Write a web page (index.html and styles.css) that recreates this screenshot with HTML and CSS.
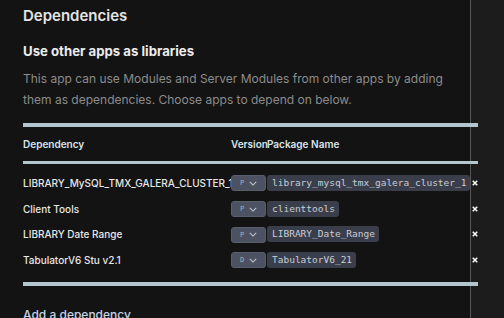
FILE: index.html
```html
<!DOCTYPE html>
<html lang="en">
<head>
    <meta charset="UTF-8">
    <meta name="viewport" content="width=device-width, initial-scale=1.0">
    <title>Dependencies</title>
    <link rel="stylesheet" href="styles.css">
</head>
<body>
    <main class="panel">
        <h1>Dependencies</h1>

        <section class="deps">
            <h2>Use other apps as libraries</h2>
            <p class="intro">This app can use Modules and Server Modules from other apps by adding them as dependencies. Choose apps to depend on below.</p>

            <div class="dep-table">
                <div class="dep-head">
                    <span>Dependency</span>
                    <span>Version</span>
                    <span>Package Name</span>
                </div>

                <div class="dep-body">
                    <div class="dep-row">
                        <span class="dep-name">LIBRARY_MySQL_TMX_GALERA_CLUSTER_1</span>
                        <span class="version">P <svg viewBox="0 0 10 6"><path d="M1 1l4 4 4-4"/></svg></span>
                        <span class="pkg">library_mysql_tmx_galera_cluster_1</span>
                        <span class="remove"><svg viewBox="0 0 8 8"><path d="M1 1l6 6M7 1l-6 6"/></svg></span>
                    </div>
                    <div class="dep-row">
                        <span class="dep-name">Client Tools</span>
                        <span class="version">P <svg viewBox="0 0 10 6"><path d="M1 1l4 4 4-4"/></svg></span>
                        <span class="pkg">clienttools</span>
                        <span class="remove"><svg viewBox="0 0 8 8"><path d="M1 1l6 6M7 1l-6 6"/></svg></span>
                    </div>
                    <div class="dep-row">
                        <span class="dep-name">LIBRARY Date Range</span>
                        <span class="version">P <svg viewBox="0 0 10 6"><path d="M1 1l4 4 4-4"/></svg></span>
                        <span class="pkg">LIBRARY_Date_Range</span>
                        <span class="remove"><svg viewBox="0 0 8 8"><path d="M1 1l6 6M7 1l-6 6"/></svg></span>
                    </div>
                    <div class="dep-row">
                        <span class="dep-name">TabulatorV6 Stu v2.1</span>
                        <span class="version">D <svg viewBox="0 0 10 6"><path d="M1 1l4 4 4-4"/></svg></span>
                        <span class="pkg">TabulatorV6_21</span>
                        <span class="remove"><svg viewBox="0 0 8 8"><path d="M1 1l6 6M7 1l-6 6"/></svg></span>
                    </div>
                </div>
            </div>

            <h3 class="add-dep">Add a dependency</h3>
        </section>
    </main>
</body>
</html>
```

FILE: styles.css
```css
* {
    margin: 0;
    padding: 0;
    box-sizing: border-box;
    font-family: 'Inter', sans-serif;
}

body {
    background-color: #1c1c1c;
    color: #e6e6e6;
    overflow: hidden;
}

.panel {
    width: 471px;
    min-height: 100vh;
    padding: 6px 0 0 23px;
    background: #131313;
    border-right: 1px solid #555;
}

h1 {
    font-size: 15px;
    font-weight: 600;
    line-height: 20px;
    color: #e4e4e4;
}

.deps h2 {
    margin-top: 15px;
    font-size: 13.2px;
    font-weight: 700;
    line-height: 20px;
    color: #ececec;
}

.intro {
    margin-top: 7px;
    max-width: 420px;
    font-size: 12px;
    line-height: 21px;
    color: #8c8c8c;
}

.dep-table {
    width: 455px;
    margin-top: 13px;
    border-top: 4px solid #b3c6ce;
    border-bottom: 4px solid #b3c6ce;
}

.dep-head {
    display: grid;
    grid-template-columns: 208px 36px 1fr;
    align-items: center;
    height: 37px;
    border-bottom: 3px solid #b3c6ce;
    font-size: 10px;
    font-weight: 600;
    color: #d9e4ec;
    white-space: nowrap;
}

.dep-body {
    padding: 6px 0 9px;
}

.dep-row {
    display: grid;
    grid-template-columns: 208px 36px 203px 8px;
    align-items: center;
    height: 25.7px;
    white-space: nowrap;
}

.dep-name {
    font-size: 10px;
    font-weight: 500;
    color: #e8e8e8;
}

.version {
    display: flex;
    align-items: center;
    justify-content: center;
    gap: 5px;
    width: 35px;
    height: 16px;
    margin-top: 1px;
    background: #4c5262;
    border: 1px solid #575d6b;
    border-radius: 3px;
    font-family: 'DejaVu Sans Mono', monospace;
    font-size: 7px;
    color: #a9aebb;
}

.version svg {
    width: 8px;
    height: 5px;
    fill: none;
    stroke: #c3c7d0;
    stroke-width: 1.3;
}

.pkg {
    justify-self: start;
    max-width: 203px;
    height: 16px;
    padding: 0 4px 0 5px;
    overflow: hidden;
    background: #3a3e4a;
    border-radius: 3px;
    font-family: 'DejaVu Sans Mono', monospace;
    font-size: 9.5px;
    line-height: 16px;
    color: #c9cdd6;
}

.remove {
    display: flex;
    justify-content: flex-end;
}

.remove svg {
    width: 6px;
    height: 6px;
    stroke: #fff;
    stroke-width: 2;
}

.add-dep {
    margin-top: 20px;
    font-size: 12px;
    font-weight: 500;
    line-height: 18px;
    color: #c3d5e6;
}
```
